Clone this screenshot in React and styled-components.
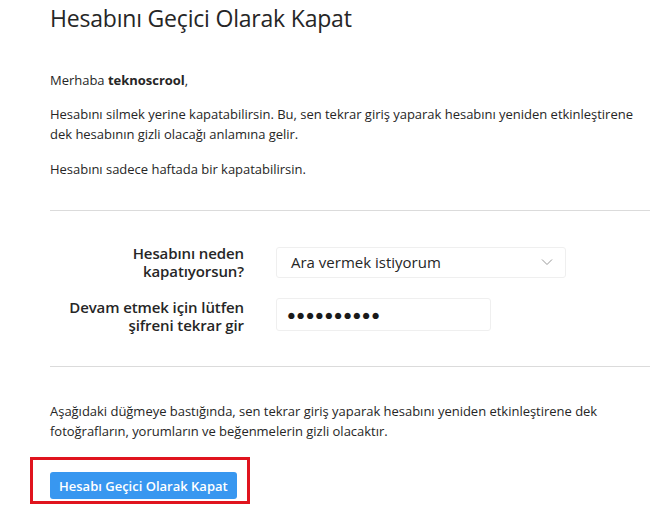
import React from 'react';
import styled, { createGlobalStyle } from 'styled-components';

const GlobalStyle = createGlobalStyle`
	html, body {
		margin: 0;
		padding: 0;
		background: #fff;
	}
	body {
		font-family: "Open Sans", "Noto Sans", sans-serif;
		color: #262626;
	}
`

const Page = styled.div`
	width: 600px;
	padding: 0 14px 0 50px;
`

const Title = styled.h1`
	margin: 0;
	padding-top: 2px;
	font-size: 23px;
	line-height: 32px;
	font-weight: 400;
	letter-spacing: -0.2px;
`

const Text = styled.p`
	margin: ${p => p.$top || 0}px 0 0;
	font-size: 13px;
	line-height: 20px;
	letter-spacing: -0.02px;
`

const Rule = styled.hr`
	margin: ${p => p.$top}px 0 0;
	border: 0;
	border-top: 1px solid #dbdbdb;
`

const Form = styled.div`
	display: flex;
	flex-direction: column;
	gap: 14px;
	margin-top: 33px;
`

const Row = styled.div`
	display: grid;
	grid-template-columns: 194px auto;
	column-gap: 32px;
	align-items: center;
`

const Label = styled.label`
	text-align: right;
	font-size: 15px;
	line-height: 18px;
	font-weight: 600;
	letter-spacing: -0.1px;
	padding-top: ${p => p.$shift || 0}px;
`

const SelectBox = styled.div`
	display: flex;
	align-items: center;
	justify-content: space-between;
	width: 290px;
	height: 31px;
	box-sizing: border-box;
	padding: 0 12px 0 14px;
	border: 1px solid #efefef;
	border-radius: 3px;
	font-size: 15px;
	letter-spacing: 0;
`

const PasswordBox = styled.div`
	display: flex;
	align-items: center;
	width: 215px;
	height: 33px;
	box-sizing: border-box;
	padding: 0 10px;
	border: 1px solid #efefef;
	border-radius: 3px;
	font-size: 14.5px;
	letter-spacing: 0.6px;
	color: #1a1a1a;
`

const Highlight = styled.div`
	display: inline-block;
	margin: 16px 0 0 -20px;
	padding: 12px 10px 2px 17px;
	border: 3px solid #e0141e;
`

const Button = styled.button`
	display: block;
	height: 27px;
	padding: 0 9px;
	border: 0;
	border-radius: 3px;
	background: #3897f0;
	color: #fff;
	font-family: "Open Sans", "Noto Sans", sans-serif;
	font-size: 13px;
	font-weight: 600;
	letter-spacing: 0;
`

const Chevron = () => (
	<svg width="12" height="8" viewBox="0 0 12 8" fill="none">
		<path d="M1 1.5 L6 6.5 L11 1.5" stroke="#999" strokeWidth="1" />
	</svg>
)

export default function App() {
	return (
		<Page>
			<GlobalStyle />
			<Title>Hesabını Geçici Olarak Kapat</Title>
			<Text $top={36}>Merhaba <b>teknoscrool</b>,</Text>
			<Text $top={14}>
				Hesabını silmek yerine kapatabilirsin. Bu, sen tekrar giriş yaparak hesabını yeniden etkinleştirene<br />
				dek hesabının gizli olacağı anlamına gelir.
			</Text>
			<Text $top={15}>Hesabını sadece haftada bir kapatabilirsin.</Text>
			<Rule $top={31} />
			<Form>
				<Row>
					<Label>Hesabını neden<br />kapatıyorsun?</Label>
					<SelectBox>
						<span>Ara vermek istiyorum</span>
						<Chevron />
					</SelectBox>
				</Row>
				<Row>
					<Label $shift={4}>Devam etmek için lütfen<br />şifreni tekrar gir</Label>
					<PasswordBox>●●●●●●●●●●</PasswordBox>
				</Row>
			</Form>
			<Rule $top={32} />
			<Text $top={34}>
				Aşağıdaki düğmeye bastığında, sen tekrar giriş yaparak hesabını yeniden etkinleştirene dek<br />
				fotoğrafların, yorumların ve beğenmelerin gizli olacaktır.
			</Text>
			<Highlight>
				<Button>Hesabı Geçici Olarak Kapat</Button>
			</Highlight>
		</Page>
	);
}
